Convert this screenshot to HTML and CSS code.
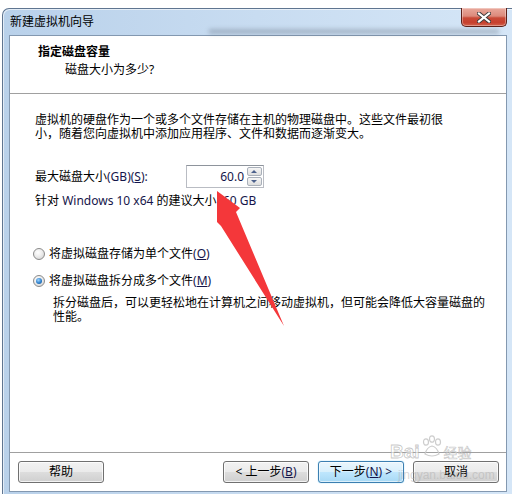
FILE: index.html
```html
<!DOCTYPE html>
<html lang="zh-CN">
<head>
<meta charset="utf-8">
<title>新建虚拟机向导</title>
<link rel="stylesheet" href="styles.css">
</head>
<body>
<div class="window">
  <div class="titlebar">
    <span class="title">新建虚拟机向导</span>
    <span class="glass-blur"></span>
    <button class="close" aria-label="关闭">
      <svg width="14" height="11" viewBox="0 0 14 11"><path d="M2 1.5 L12 9.5 M12 1.5 L2 9.5" stroke="#3a3a3a" stroke-width="4" stroke-linecap="square"/><path d="M2 1.5 L12 9.5 M12 1.5 L2 9.5" stroke="#ffffff" stroke-width="2.2" stroke-linecap="square"/></svg>
    </button>
  </div>
  <div class="client">
    <div class="header">
      <div class="h-title">指定磁盘容量</div>
      <div class="h-sub">磁盘大小为多少?</div>
    </div>
    <div class="content">
      <p class="intro">虚拟机的硬盘作为一个或多个文件存储在主机的物理磁盘中。这些文件最初很小，随着您向虚拟机中添加应用程序、文件和数据而逐渐变大。</p>
      <div class="size-row">
        <label class="size-label">最大磁盘大小<span class="lat">(GB)(<u>S</u>):</span></label>
        <div class="spin">
          <div class="spin-value lat">60.0</div>
          <div class="spin-btns">
            <span class="spin-btn up"></span>
            <span class="spin-btn down"></span>
          </div>
        </div>
      </div>
      <p class="hint">针对 <span class="lat">Windows 10 x64</span> 的建议大小<span class="lat">: 60 GB</span></p>
      <div class="radio-row first"><span class="radio"></span>将虚拟磁盘存储为单个文件<span class="lat">(<u>O</u>)</span></div>
      <div class="radio-row second"><span class="radio checked"></span>将虚拟磁盘拆分成多个文件<span class="lat">(<u>M</u>)</span></div>
      <p class="desc">拆分磁盘后，可以更轻松地在计算机之间移动虚拟机，但可能会降低大容量磁盘的性能。</p>
    </div>
    <div class="footer">
      <button class="btn">帮助</button>
      <span class="spacer"></span>
      <button class="btn">&lt; 上一步<span class="lat">(<u>B</u>)</span></button>
      <button class="btn default">下一步<span class="lat">(<u>N</u>) &gt;</span></button>
      <button class="btn">取消</button>
    </div>
  </div>
</div>
<svg class="arrow" width="512" height="494" viewBox="0 0 512 494"><polygon points="217,191 240,208 236,212 284,326 221,226 217,222" fill="#f4373a"/></svg>
<div class="watermark">
  <div class="wm-top"><span class="wm-bai">Bai</span><svg class="wm-paw" width="22" height="24" viewBox="0 0 22 24"><g fill="none" stroke="#c8c8c8" stroke-width="1.2"><ellipse cx="5" cy="7" rx="2.5" ry="3.2"/><ellipse cx="11" cy="4" rx="2.5" ry="3.2"/><ellipse cx="17" cy="7" rx="2.5" ry="3.2"/><path d="M4 19 Q6 12 11 11 Q16 12 18 19 Q11 23 4 19 Z"/></g></svg><span class="wm-jy">经验</span></div>
  <div class="wm-url">jingyan.baidu.com</div>
</div>
</body>
</html>
```
FILE: styles.css
```css
html, body {
  margin: 0;
  padding: 0;
}
body {
  width: 512px;
  height: 494px;
  overflow: hidden;
  position: relative;
  background: #ffffff;
  font-family: "Noto Sans", "Noto Sans CJK SC", sans-serif;
  font-size: 12px;
  color: #000;
}
.lat { color: #15154a; }
u { text-underline-offset: 1px; }

.window {
  margin: 8px 0 0 2px;
  width: 510px;
  box-sizing: border-box;
  border: 1px solid #5f7590;
  border-right: none;
  border-radius: 7px 0 0 0;
  padding: 0 5px 3px 6px;
  background: linear-gradient(to right, #b9d1ea 0%, #c8dcf1 50%, #d5e6f7 100%);
  box-shadow: inset 1px 1px 0 rgba(255,255,255,0.6);
}
.titlebar {
  height: 26px;
  display: flex;
  align-items: center;
  position: relative;
}
.title {
  margin-left: 1px;
  line-height: 16px;
  color: #000;
}
.glass-blur {
  position: absolute;
  left: 200px;
  right: 8px;
  top: 20px;
  height: 5px;
  background: rgba(70, 80, 95, 0.28);
  filter: blur(2px);
}
.close {
  margin-left: auto;
  align-self: flex-start;
  margin-top: -1px;
  width: 46px;
  height: 19px;
  padding: 0;
  border: 1px solid #5c2018;
  border-top: none;
  border-radius: 0 0 5px 5px;
  background: linear-gradient(to bottom, #e9a99c 0%, #dc8a7b 45%, #c94a37 55%, #c6402e 80%, #d2614c 100%);
  box-shadow: inset 0 0 0 1px rgba(255,255,255,0.35);
  display: flex;
  align-items: center;
  justify-content: center;
  position: relative;
  z-index: 1;
}
.close svg { display: block; }

.client {
  height: 455px;
  border: 1px solid #8398b0;
  background: #ffffff;
  display: flex;
  flex-direction: column;
}
.header {
  height: 57px;
  flex: none;
  border-bottom: 1px solid #a0a0a0;
  padding-left: 28px;
  box-sizing: content-box;
}
.h-title {
  margin-top: 8px;
  line-height: 16px;
  font-weight: bold;
}
.h-sub {
  margin-top: 2px;
  margin-left: 27px;
  line-height: 16px;
}
.content {
  flex: 1;
  padding: 19px 0 0 25px;
}
.intro {
  margin: 0;
  width: 414px;
  line-height: 14px;
}
.size-row {
  margin-top: 24px;
  display: flex;
  align-items: center;
  height: 23px;
}
.size-label {
  width: 151px;
  line-height: 16px;
}
.spin {
  width: 78px;
  height: 23px;
  box-sizing: border-box;
  border: 1px solid #b9bcc3;
  border-top-color: #8e949c;
  display: flex;
}
.spin-value {
  flex: 1;
  text-align: right;
  padding-right: 3px;
  line-height: 21px;
}
.spin-btns {
  width: 15px;
  margin: 1px 1px 0 0;
  display: flex;
  flex-direction: column;
  gap: 1px;
}
.spin-btn {
  height: 9px;
  box-sizing: border-box;
  border: 1px solid #a9b0ba;
  border-radius: 2px;
  background: linear-gradient(to bottom, #f6f6f6, #dedede);
  position: relative;
}
.spin-btn::after {
  content: "";
  position: absolute;
  left: 3px;
  width: 0;
  height: 0;
  border-left: 3.5px solid transparent;
  border-right: 3.5px solid transparent;
}
.spin-btn.up::after { top: 2px; border-bottom: 3px solid #4c618c; }
.spin-btn.down::after { top: 2px; border-top: 3px solid #4c618c; }

.hint {
  margin: 6px 0 0;
  line-height: 14px;
}
.radio-row {
  display: flex;
  align-items: center;
  line-height: 16px;
}
.radio-row.first { margin-top: 38px; }
.radio-row.second { margin-top: 11px; }
.radio {
  width: 12px;
  height: 12px;
  box-sizing: border-box;
  border: 1px solid #8a8a8a;
  border-radius: 50%;
  margin: 0 4px 0 -2px;
  background: radial-gradient(circle at 40% 35%, #ffffff 0%, #efefef 40%, #cdcdcd 100%);
  position: relative;
}
.radio.checked::after {
  content: "";
  position: absolute;
  left: 2px;
  top: 2px;
  width: 6px;
  height: 6px;
  border-radius: 50%;
  background: radial-gradient(circle at 40% 35%, #9fd5ff 0%, #2e80cc 55%, #144b84 100%);
}
.desc {
  margin: 7px 0 0 18px;
  width: 438px;
  line-height: 14px;
}

.footer {
  flex: none;
  border-top: 1px solid #a0a0a0;
  padding: 8px 7px 8px 8px;
  display: flex;
  gap: 9px;
}
.spacer { flex: 1; }
.btn {
  width: 86px;
  height: 22px;
  padding: 0;
  font: inherit;
  line-height: 16px;
  color: #000;
  border: 1px solid #707070;
  border-radius: 3px;
  background: linear-gradient(to bottom, #f2f2f2 0%, #ebebeb 48%, #dddddd 52%, #cfcfcf 100%);
  box-shadow: inset 0 0 0 1px rgba(255,255,255,0.75);
}
.btn.default {
  border-color: #3c7fb1;
  background: linear-gradient(to bottom, #eaf6fd 0%, #d9f0fc 48%, #bee6fd 52%, #a7d9f5 100%);
  box-shadow: inset 0 0 0 1px rgba(255,255,255,0.6), 0 0 1px #48bff6;
}

.arrow {
  position: absolute;
  left: 0;
  top: 0;
  pointer-events: none;
}
.watermark {
  position: absolute;
  left: 390px;
  top: 433px;
  color: rgba(160, 160, 160, 0.45);
  pointer-events: none;
}
.wm-top {
  display: flex;
  align-items: flex-end;
  height: 30px;
}
.wm-bai {
  font-family: "Liberation Sans", sans-serif;
  font-size: 19px;
  font-weight: bold;
  line-height: 22px;
  color: rgba(255,255,255,0.6);
  -webkit-text-stroke: 0.8px rgba(150,150,150,0.55);
}
.wm-paw { margin: 0 1px 4px 1px; opacity: 0.9; }
.wm-jy {
  font-size: 14px;
  line-height: 20px;
  color: rgba(255,255,255,0.6);
  -webkit-text-stroke: 0.6px rgba(150,150,150,0.55);
}
.wm-url {
  margin: 5px 0 0 8px;
  font-family: "Liberation Sans", sans-serif;
  font-size: 12px;
  line-height: 14px;
  color: rgba(175,175,175,0.5);
}
```
